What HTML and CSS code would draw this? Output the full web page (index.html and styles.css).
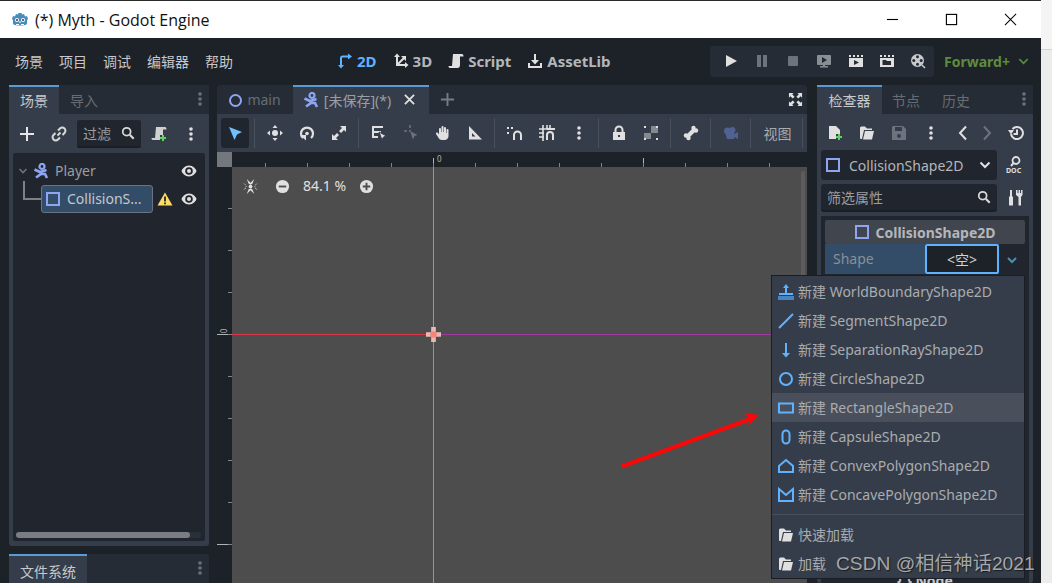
FILE: index.html
```html
<!DOCTYPE html>
<html lang="en">

<head>
    <meta charset="UTF-8">
    <meta name="viewport" content="width=device-width, initial-scale=1.0">
    <title>(*) Myth - Godot Engine</title>
    <link rel="stylesheet" href="styles.css">
</head>

<body>
    <div class="window">
        <div class="titlebar">
            <svg class="logo" viewBox="0 0 18 18"><path fill="#478cbf" d="M1 8l1-3 2 .5L5 3l2 .5L7.500 2h3l.5 1.500L13 3l1 2.500L16 5l1 3-1 1v4c-2 2-12 2-14 0V9z"/><circle cx="6" cy="9" r="2" fill="#fff"/><circle cx="12" cy="9" r="2" fill="#fff"/><circle cx="6" cy="9" r="1" fill="#333"/><circle cx="12" cy="9" r="1" fill="#333"/><path stroke="#fff" d="M5 13.500h3M10 13.500h3M9 10v2"/></svg>
            <span class="title-text">(*) Myth - Godot Engine</span>
            <div class="win-controls">
                <svg viewBox="0 0 14 14"><path stroke="#000" stroke-width="1.200" d="M1 7h12"/></svg>
                <svg viewBox="0 0 14 14"><rect x="1.500" y="1.500" width="11" height="11" fill="none" stroke="#000" stroke-width="1.200"/></svg>
                <svg viewBox="0 0 14 14"><path stroke="#000" stroke-width="1.100" d="M1 1l12 12M13 1L1 13"/></svg>
            </div>
        </div>

        <div class="menubar">
            <div class="menus">
                <span>场景</span><span>项目</span><span>调试</span><span>编辑器</span><span>帮助</span>
            </div>
            <div class="modes">
                <span class="mode active"><svg viewBox="0 0 16 16"><path fill="none" stroke="#5fb2ff" stroke-width="2" d="M4 13V5a1.500 1.500 0 0 1 1.500-1.500H12"/><path fill="#5fb2ff" d="M1 12h6l-3 3.500zM11 0.500v6l4-3z"/></svg>2D</span>
                <span class="mode"><svg viewBox="0 0 16 16"><path fill="none" stroke="#e0e0e0" stroke-width="2" d="M4 3v9h9M4 12l7-7"/><path fill="#e0e0e0" d="M1 4l3-3.500L7 4zM12 9l3.500 3-3.500 3zM8 3h5v5z"/></svg>3D</span>
                <span class="mode"><svg viewBox="0 0 16 16"><path fill="#e0e0e0" d="M5 1h9c1 0 1.500 1 1.500 2.500H12V12c0 2-1 3-2.500 3H2c-1 0-1.500-1-1.500-2H4z"/></svg>Script</span>
                <span class="mode"><svg viewBox="0 0 16 16"><path fill="#e0e0e0" d="M7 1h2v6h3l-4 4.500L4 7h3zM1 10h2v3h10v-3h2v5H1z"/></svg>AssetLib</span>
            </div>
            <div class="run-box">
                <svg viewBox="0 0 16 16"><path fill="#e0e0e0" d="M3 2l11 6-11 6z"/></svg>
                <svg viewBox="0 0 16 16"><path fill="#6d737c" d="M3 2h4v12H3zM9 2h4v12H9z"/></svg>
                <svg viewBox="0 0 16 16"><rect x="3" y="3" width="10" height="10" rx="1" fill="#6d737c"/></svg>
                <svg viewBox="0 0 16 16"><path fill="#8a8f96" d="M2 2h12a1 1 0 0 1 1 1v8a1 1 0 0 1-1 1H9v1h3v1.500H4V13h3v-1H2a1 1 0 0 1-1-1V3a1 1 0 0 1 1-1z"/><path fill="#262c36" d="M6 4l5 3-5 3z"/></svg>
                <svg viewBox="0 0 16 16"><path fill="#e0e0e0" d="M1 2h2v2H1zM5 2h2v2H5zM9 2h2v2H9zM13 2h2v2h-2zM1 5h14v9H1z"/><path fill="#262c36" d="M6 7l5 2.500L6 12z"/></svg>
                <svg viewBox="0 0 16 16"><path fill="#e0e0e0" d="M1 2h2v2H1zM5 2h2v2H5zM9 2h2v2H9zM13 2h2v2h-2zM1 5h14v9H1z"/><path fill="#262c36" d="M3.500 7H7l1 1h4v4H3.500z"/></svg>
                <svg viewBox="0 0 16 16"><circle cx="7.500" cy="7.500" r="6.500" fill="#c8cacc"/><circle cx="7.500" cy="3.800" r="1.500" fill="#262c36"/><circle cx="7.500" cy="11.200" r="1.500" fill="#262c36"/><circle cx="3.800" cy="7.500" r="1.500" fill="#262c36"/><circle cx="11.200" cy="7.500" r="1.500" fill="#262c36"/><path stroke="#c8cacc" stroke-width="1.500" d="M12 12l3 3"/></svg>
            </div>
            <span class="renderer">Forward+<svg viewBox="0 0 12 12"><path fill="none" stroke="#5d8c3f" stroke-width="1.800" d="M1.500 3.500L6 8l4.500-4.500"/></svg></span>
        </div>

        <div class="main">
            <div class="left-col">
                <div class="dock scene-dock">
                    <div class="tabbar">
                        <span class="tab active dock-tab">场景</span>
                        <span class="tab dock-tab">导入</span>
                        <svg class="dots dots-end" viewBox="0 0 6 16"><circle cx="3" cy="3" r="1.800"/><circle cx="3" cy="8" r="1.800"/><circle cx="3" cy="13" r="1.800"/></svg>
                    </div>
                    <div class="scene-tools">
                        <svg class="ic" viewBox="0 0 16 16"><path stroke="#e6e6e6" stroke-width="2" d="M8 1v14M1 8h14"/></svg>
                        <svg class="ic" viewBox="0 0 16 16"><path fill="none" stroke="#d8d8d8" stroke-width="2" d="M6.500 9.500l3-3M7 4.500l2-2a3 3 0 0 1 4.500 4.500l-2 2M9 11.500l-2 2A3 3 0 0 1 2.500 9l2-2"/></svg>
                        <div class="filter-box"><span>过滤</span><svg viewBox="0 0 16 16"><circle cx="6.500" cy="6.500" r="4.500" fill="none" stroke="#d8d8d8" stroke-width="2"/><path stroke="#d8d8d8" stroke-width="2.500" d="M10 10l4.500 4.500"/></svg></div>
                        <svg class="ic" viewBox="0 0 16 16"><path fill="#d0d0d0" d="M5 1h9c1 0 1.500 1 1.500 2.500H12V9H9v5H2c-1 0-1.500-1-1.500-2H4z"/><path stroke="#5fd35f" stroke-width="2" d="M12 9v6M9 12h6"/></svg>
                        <svg class="dots dots-tool" viewBox="0 0 6 16"><circle cx="3" cy="3" r="1.800"/><circle cx="3" cy="8" r="1.800"/><circle cx="3" cy="13" r="1.800"/></svg>
                    </div>
                    <div class="tree">
                        <div class="tree-row">
                            <svg class="arrow" viewBox="0 0 10 10"><path fill="none" stroke="#6d737c" stroke-width="1.600" d="M1.500 3L5 6.500 8.500 3"/></svg>
                            <svg class="ic node-ic" viewBox="0 0 16 16"><circle cx="9" cy="3.500" r="2.500" fill="none" stroke="#8da5f3" stroke-width="2.200"/><path fill="none" stroke="#8da5f3" stroke-width="2.600" d="M1.500 6.500L7 9l6.500-2M8 8v3l-5 3.500M8 11h4l2 4"/></svg>
                            <span class="tree-name">Player</span>
                            <svg class="eye" viewBox="0 0 16 16"><path fill="#e0e0e0" d="M8 2.500C4 2.500 1 6 0.500 8 1 10 4 13.500 8 13.500S15 10 15.500 8C15 6 12 2.500 8 2.500z"/><circle cx="8" cy="8" r="3.800" fill="#21262e"/><circle cx="8" cy="8" r="2" fill="#e0e0e0"/></svg>
                        </div>
                        <div class="tree-row child-row">
                            <span class="connector"></span>
                            <div class="selected-node">
                                <span class="shape-box"></span>
                                <span class="node-label">CollisionS...</span>
                            </div>
                            <svg class="warn" viewBox="0 0 16 16"><path fill="#ffdd65" d="M8 1.500L15.500 14.500H.5z"/><path stroke="#21262e" stroke-width="1.800" d="M8 5.500v5M8 11.500v1.800"/></svg>
                            <svg class="eye" viewBox="0 0 16 16"><path fill="#e0e0e0" d="M8 2.500C4 2.500 1 6 0.500 8 1 10 4 13.500 8 13.500S15 10 15.500 8C15 6 12 2.500 8 2.500z"/><circle cx="8" cy="8" r="3.800" fill="#21262e"/><circle cx="8" cy="8" r="2" fill="#e0e0e0"/></svg>
                        </div>
                        <div class="tree-scroll"><span></span></div>
                    </div>
                </div>
                <div class="dock fs-dock">
                    <div class="tabbar">
                        <span class="tab active fs-tab">文件系统</span>
                        <svg class="dots dots-end" viewBox="0 0 6 16"><circle cx="3" cy="3" r="1.800"/><circle cx="3" cy="8" r="1.800"/><circle cx="3" cy="13" r="1.800"/></svg>
                    </div>
                </div>
            </div>

            <div class="center-col">
                <div class="tabbar scene-tabs">
                    <span class="tab main-tab"><span class="ring"></span>main</span>
                    <span class="tab active unsaved-tab">
                        <svg viewBox="0 0 16 16"><circle cx="9" cy="3.500" r="2.500" fill="none" stroke="#8da5f3" stroke-width="2.200"/><path fill="none" stroke="#8da5f3" stroke-width="2.600" d="M1.500 6.500L7 9l6.500-2M8 8v3l-5 3.500M8 11h4l2 4"/></svg>
                        [未保存](*)
                        <svg class="close" viewBox="0 0 12 12"><path stroke="#e0e0e0" stroke-width="2" d="M1 1l10 10M11 1L1 11"/></svg>
                    </span>
                    <svg class="add-tab" viewBox="0 0 16 16"><path stroke="#777c83" stroke-width="2" d="M8 1v14M1 8h14"/></svg>
                    <svg class="fullscreen" viewBox="0 0 16 16"><path fill="#e0e0e0" d="M1 1h5L4.500 2.500 7 5 5 7 2.500 4.500 1 6zM15 1v5l-1.500-1.500L11 7 9 5l2.500-2.500L10 1zM1 15v-5l1.500 1.500L5 9l2 2-2.500 2.500L6 15zM15 15h-5l1.500-1.500L9 11l2-2 2.500 2.500L15 10z"/></svg>
                </div>
                <div class="viewport-tools">
                    <span class="tool selected"><svg viewBox="0 0 16 16"><path fill="#70bfff" d="M2 2l13 5-5 2.500L7.500 15z"/></svg></span>
                    <i class="sep"></i>
                    <span class="tool"><svg viewBox="0 0 16 16"><path fill="#e0e0e0" d="M8 0l2.500 3h-5zM8 16l-2.500-3h5zM0 8l3-2.500v5zM16 8l-3 2.500v-5z"/><circle cx="8" cy="8" r="3" fill="#e0e0e0"/></svg></span>
                    <span class="tool"><svg viewBox="0 0 16 16"><path fill="none" stroke="#e0e0e0" stroke-width="2.200" d="M4 13a6 6 0 1 1 8 0"/><circle cx="8" cy="8.500" r="1.800" fill="#e0e0e0"/><path fill="#e0e0e0" d="M1 10h6v5.500z"/></svg></span>
                    <span class="tool"><svg viewBox="0 0 16 16"><path fill="#e0e0e0" d="M9 1h6v6l-2-2-3 3-2-2 3-3zM7 15H1V9l2 2 3-3 2 2-3 3z"/></svg></span>
                    <i class="sep"></i>
                    <span class="tool"><svg viewBox="0 0 16 16"><path fill="#e0e0e0" d="M1 1h11v2H3v3h7v2H3v3h4v2H1z"/><path fill="#e0e0e0" stroke="#363d4a" d="M8 7l7.500 4-3 1-1.500 3z"/></svg></span>
                    <span class="tool"><svg viewBox="0 0 16 16"><path stroke="#6d737c" stroke-width="1.600" stroke-dasharray="3 2" d="M1 6h6M7 0v6"/><path fill="#6d737c" d="M7 6l7.500 4-3 1-1.500 3.500z"/></svg></span>
                    <span class="tool"><svg viewBox="0 0 16 16"><path fill="#e0e0e0" d="M4 4a1 1 0 0 1 2 0v3h.5V2a1 1 0 0 1 2 0v5H9V3a1 1 0 0 1 2 0v5h.5V5a1 1 0 0 1 2 0v6c0 2-1.500 4-4 4H7c-2 0-3-1-4-3L1 9c-.5-1 1-2 2-1l1 1.500z"/></svg></span>
                    <span class="tool"><svg viewBox="0 0 16 16"><path fill="#e0e0e0" fill-rule="evenodd" d="M2 1l13 13.500H2zM5 8v3.500h3.500z"/></svg></span>
                    <i class="sep"></i>
                    <span class="tool"><svg viewBox="0 0 16 16"><path fill="none" stroke="#e0e0e0" stroke-width="2" d="M7 15V10a3.500 3.500 0 0 1 7 0v5"/><path fill="#e0e0e0" d="M0 2h2v2H0zM4 2h2v2H4zM0 7h2v2H0z"/></svg></span>
                    <span class="tool"><svg viewBox="0 0 16 16"><path fill="none" stroke="#e0e0e0" stroke-width="1.600" d="M0 4h10M0 8h5M0 12h5M4 0v16M8 0v4M11 0v4"/><path fill="none" stroke="#e0e0e0" stroke-width="2" d="M8 15V10a3 3 0 0 1 6 0v5M8 4h8"/></svg></span>
                    <span class="tool"><svg class="dots" viewBox="0 0 6 16"><circle cx="3" cy="3" r="1.800" fill="#e0e0e0"/><circle cx="3" cy="8" r="1.800" fill="#e0e0e0"/><circle cx="3" cy="13" r="1.800" fill="#e0e0e0"/></svg></span>
                    <i class="sep"></i>
                    <span class="tool"><svg viewBox="0 0 16 16"><path fill="#e0e0e0" fill-rule="evenodd" d="M2 7h1.500V5a4.500 4.500 0 0 1 9 0v2H14v8H2zM5.500 7h5V5a2.500 2.500 0 0 0-5 0zM7 10v2h2v-2z"/></svg></span>
                    <span class="tool"><svg viewBox="0 0 16 16"><path fill="#868a90" d="M8 1h7v7H8v6H1V8h7z"/><path fill="#e0e0e0" d="M1 1h2v2H1zM13 1h2v2h-2zM1 13h2v2H1zM13 13h2v2h-2z"/></svg></span>
                    <i class="sep"></i>
                    <span class="tool"><svg viewBox="0 0 16 16"><path stroke="#e0e0e0" stroke-width="4" d="M4 12l8-8"/><circle cx="3" cy="10.500" r="2.200" fill="#e0e0e0"/><circle cx="5.500" cy="13" r="2.200" fill="#e0e0e0"/><circle cx="10.500" cy="3" r="2.200" fill="#e0e0e0"/><circle cx="13" cy="5.500" r="2.200" fill="#e0e0e0"/></svg></span>
                    <i class="sep"></i>
                    <span class="tool"><svg viewBox="0 0 16 16"><circle cx="4.500" cy="6" r="3.500" fill="#4f6291"/><circle cx="9.500" cy="5" r="3" fill="#4f6291"/><path fill="#4f6291" d="M2 7h9v7H4zM11 9l4-2v7l-4-2z"/></svg></span>
                    <i class="sep"></i>
                    <span class="view-btn">视图</span>
                    <i class="sep"></i>
                </div>
                <div class="ruler-h"><span class="corner"></span><span class="ticks-h"><small class="zero">0</small></span></div>
                <div class="canvas-row">
                    <div class="ruler-v"><small class="zero-v">0</small></div>
                    <div class="canvas">
                        <div class="zoom-bar">
                            <svg viewBox="0 0 16 16"><path fill="#e0e0e0" d="M4 0l4 4 4-4-2 5-2 1-2-1zM4 16l4-4 4 4-2-5-2-1-2 1zM0 4l4 4-4 4 3-2V6zM16 4l-4 4 4 4-3-2V6z"/><circle cx="8" cy="8" r="2" fill="#e0e0e0"/></svg>
                            <svg class="zoom-btn" viewBox="0 0 16 16"><circle cx="8" cy="8" r="7" fill="#e0e0e0"/><path stroke="#4d4d4d" stroke-width="2" d="M4 8h8"/></svg>
                            <span>84.1 %</span>
                            <svg class="zoom-btn" viewBox="0 0 16 16"><circle cx="8" cy="8" r="7" fill="#e0e0e0"/><path stroke="#4d4d4d" stroke-width="2" d="M4 8h8M8 4v8"/></svg>
                        </div>
                        <span class="axis axis-v-top"></span>
                        <span class="axis axis-v-bottom"></span>
                        <span class="axis axis-h-left"></span>
                        <span class="axis axis-h-right"></span>
                        <svg class="origin" viewBox="0 0 16 16"><path fill="#e9b9b4" d="M5.500 0h5v5.500H16v5h-5.500V16h-5v-5.500H0v-5h5.500z"/><circle cx="8" cy="8" r="3.500" fill="#f8837b"/></svg>
                        <span class="canvas-scroll"></span>
                    </div>
                </div>
            </div>

            <div class="dock right-col">
                <div class="tabbar">
                    <span class="tab active insp-tab">检查器</span>
                    <span class="tab insp-tab plain">节点</span>
                    <span class="tab insp-tab plain">历史</span>
                    <svg class="dots dots-end" viewBox="0 0 6 16"><circle cx="3" cy="3" r="1.800"/><circle cx="3" cy="8" r="1.800"/><circle cx="3" cy="13" r="1.800"/></svg>
                </div>
                <div class="insp-tools">
                    <svg viewBox="0 0 16 16"><path fill="#e0e0e0" d="M2 1h7l4 4v4H9v5H2z"/><path stroke="#5fd35f" stroke-width="2" d="M12 9v6M9 12h6"/></svg>
                    <svg viewBox="0 0 16 16"><path fill="#e0e0e0" d="M1 3c0-1 1-1.500 1.500-1.500H6L8 3.500h5V5H5L3 14H2c-.5 0-1-.5-1-1z"/><path fill="#e0e0e0" d="M6 6h9l-2 8.500H4z"/></svg>
                    <svg viewBox="0 0 16 16"><path fill="#6d737c" fill-rule="evenodd" d="M2 1h10l3 3v11H1V2zM4 2v4h7V2zM8 9a2 2 0 1 0 0 4 2 2 0 0 0 0-4z"/></svg>
                    <svg class="dots" viewBox="0 0 6 16"><circle cx="3" cy="3" r="1.800" fill="#e0e0e0"/><circle cx="3" cy="8" r="1.800" fill="#e0e0e0"/><circle cx="3" cy="13" r="1.800" fill="#e0e0e0"/></svg>
                    <svg class="chev" viewBox="0 0 10 16"><path fill="none" stroke="#e0e0e0" stroke-width="2" d="M8 1.500L2 8l6 6.500"/></svg>
                    <svg class="chev" viewBox="0 0 10 16"><path fill="none" stroke="#6d737c" stroke-width="2" d="M2 1.500L8 8l-6 6.500"/></svg>
                    <svg viewBox="0 0 16 16"><path fill="none" stroke="#e0e0e0" stroke-width="2" d="M3 9a6 6 0 1 0 1.500-5M9 4.500V9H5.500"/><path fill="#e0e0e0" d="M0 5h6L3 9.500z"/></svg>
                </div>
                <div class="picker-row">
                    <div class="picker"><span class="shape-box"></span><span>CollisionShape2D</span><svg viewBox="0 0 12 12"><path fill="none" stroke="#e0e0e0" stroke-width="2" d="M1.500 3.500L6 8l4.500-4.500"/></svg></div>
                    <svg class="doc-ic" viewBox="0 0 18 18"><circle cx="10" cy="4.500" r="3.500" fill="none" stroke="#e0e0e0" stroke-width="1.800"/><path stroke="#e0e0e0" stroke-width="2" d="M7.500 7L5 10"/><text x="0" y="17" class="doc-text">DOC</text></svg>
                </div>
                <div class="picker-row filter-row">
                    <div class="picker filter-props"><span>筛选属性</span><svg viewBox="0 0 16 16"><circle cx="6.500" cy="6.500" r="4.500" fill="none" stroke="#d8d8d8" stroke-width="2"/><path stroke="#d8d8d8" stroke-width="2.500" d="M10 10l4.500 4.500"/></svg></div>
                    <svg class="doc-ic" viewBox="0 0 18 18"><path fill="#e0e0e0" d="M4 1h2v6l1 1v8.500H3V8l1-1zM10 1h1.500v3h1V1H14v3h1V1h1.500v5L15 8v8.500h-2.500V8L10 6z"/></svg>
                </div>
                <div class="insp-box">
                    <div class="insp-head"><span class="shape-box"></span>CollisionShape2D</div>
                    <div class="prop-row">
                        <span class="prop-name">Shape</span>
                        <span class="prop-value">&lt;空&gt;</span>
                        <svg viewBox="0 0 12 12"><path fill="none" stroke="#4f8cb0" stroke-width="2" d="M2 4l4 4 4-4"/></svg>
                    </div>
                    <div class="prop-node">{ } Node</div>
                </div>
            </div>
        </div>
    </div>

    <div class="popup">
        <div class="pop-item"><svg viewBox="0 0 16 16"><path fill="#5fb2ff" d="M8 0l3 4H9v5h6v2H1V9h6V4H5z"/><rect y="12" width="16" height="4" fill="#4a83bd"/></svg>新建 WorldBoundaryShape2D</div>
        <div class="pop-item"><svg viewBox="0 0 16 16"><path stroke="#5fb2ff" stroke-width="2" d="M1 15L15 1"/></svg>新建 SegmentShape2D</div>
        <div class="pop-item"><svg viewBox="0 0 16 16"><path fill="#5fb2ff" d="M7 1h2v10h3l-4 4.500L4 11h3z"/></svg>新建 SeparationRayShape2D</div>
        <div class="pop-item"><svg viewBox="0 0 16 16"><circle cx="8" cy="8" r="6" fill="none" stroke="#5fb2ff" stroke-width="2"/></svg>新建 CircleShape2D</div>
        <div class="pop-item hover"><svg viewBox="0 0 16 16"><rect x="1" y="3.500" width="14" height="9" fill="none" stroke="#5fb2ff" stroke-width="2"/></svg>新建 RectangleShape2D</div>
        <div class="pop-item"><svg viewBox="0 0 16 16"><rect x="4.500" y="1.500" width="7" height="13" rx="3.500" fill="none" stroke="#5fb2ff" stroke-width="2"/></svg>新建 CapsuleShape2D</div>
        <div class="pop-item"><svg viewBox="0 0 16 16"><path fill="none" stroke="#5fb2ff" stroke-width="2" d="M1 8l7-6 7 6v6H1z"/></svg>新建 ConvexPolygonShape2D</div>
        <div class="pop-item"><svg viewBox="0 0 16 16"><path fill="none" stroke="#5fb2ff" stroke-width="2" d="M1 2l7 6 7-6v12H1z"/></svg>新建 ConcavePolygonShape2D</div>
        <div class="pop-sep"></div>
        <div class="pop-item"><svg viewBox="0 0 16 16"><path fill="#e0e0e0" d="M1 3c0-1 1-1.500 1.500-1.500H6L8 3.500h5V5H5L3 14H2c-.5 0-1-.5-1-1z"/><path fill="#e0e0e0" d="M6 6h9l-2 8.500H4z"/></svg>快速加载</div>
        <div class="pop-item"><svg viewBox="0 0 16 16"><path fill="#e0e0e0" d="M1 3c0-1 1-1.500 1.500-1.500H6L8 3.500h5V5H5L3 14H2c-.5 0-1-.5-1-1z"/><path fill="#e0e0e0" d="M6 6h9l-2 8.500H4z"/></svg>加载</div>
    </div>

    <svg class="red-arrow" viewBox="0 0 150 60"><path stroke="#f80808" stroke-width="4" stroke-linecap="round" d="M3 58L130 11"/><path fill="#f80808" d="M139 7L124 5l6 6-2 7z"/></svg>
    <span class="watermark">CSDN @相信神话2021</span>
</body>

</html>
```

FILE: styles.css
```css
* {
    margin: 0;
    padding: 0;
    box-sizing: border-box;
}

body {
    font-family: "Noto Sans", "Noto Sans CJK SC", sans-serif;
    font-size: 14px;
    color: #c6c8cb;
    background-image: linear-gradient(#f4f4f4 49px, #d4d4d4 49px, #d4d4d4 50px, #ececec 50px);
    width: 1052px;
    height: 583px;
    overflow: hidden;
    position: relative;
}

svg {
    display: block;
    flex: none;
}

.window {
    width: 1041px;
    height: 583px;
    background-color: #1d2229;
    display: flex;
    flex-direction: column;
}

/* title bar */
.titlebar {
    height: 38px;
    flex: none;
    background-color: #fff;
    border-top: 1px solid #2a2a2a;
    display: flex;
    align-items: center;
    padding-left: 11px;
    color: #111;
}

.logo {
    width: 18px;
    height: 18px;
}

.title-text {
    margin-left: 6px;
    font-family: "Open Sans", "Noto Sans CJK SC", sans-serif;
    font-size: 16px;
}

.win-controls {
    margin-left: auto;
    display: flex;
    gap: 46px;
    padding-right: 24px;
}

.win-controls svg {
    width: 13px;
    height: 13px;
}

/* menu bar */
.menubar {
    height: 46px;
    flex: none;
    display: flex;
    align-items: center;
    padding-left: 15px;
    position: relative;
}

.menus {
    display: flex;
    gap: 16px;
    width: 322px;
    color: #c6c8cb;
}

.modes {
    display: flex;
    gap: 16px;
    font-size: 15px;
    font-weight: 700;
    color: #b4b6ba;
}

.mode {
    display: flex;
    align-items: center;
    gap: 4px;
}

.mode svg {
    width: 16px;
    height: 16px;
}

.mode.active {
    color: #5fb2ff;
}

.run-box {
    margin-left: auto;
    width: 224px;
    height: 31px;
    background-color: #262c36;
    border-radius: 3px;
    display: flex;
    align-items: center;
    justify-content: space-between;
    padding: 0 8px 0 13px;
}

.run-box svg {
    width: 16px;
    height: 16px;
}

.renderer {
    width: 107px;
    padding-left: 10px;
    color: #5d8c3f;
    font-weight: 700;
    display: flex;
    align-items: center;
    gap: 8px;
}

.renderer svg {
    width: 11px;
    height: 11px;
}

/* docks */
.main {
    flex: 1;
    display: flex;
    padding-left: 9px;
    padding-top: 1px;
    min-height: 0;
}

.left-col {
    width: 200px;
    flex: none;
    display: flex;
    flex-direction: column;
    gap: 8px;
}

.dock {
    background-color: #363d4a;
    border-radius: 3px;
    display: flex;
    flex-direction: column;
}

.scene-dock {
    height: 464px;
}

.fs-dock {
    flex: 1;
}

.tabbar {
    height: 29px;
    flex: none;
    background-color: #262c36;
    display: flex;
    align-items: stretch;
    position: relative;
    border-radius: 3px 3px 0 0;
}

.tab {
    display: flex;
    align-items: center;
    justify-content: center;
    color: #676c74;
    border-top: 2px solid transparent;
    padding-bottom: 2px;
}

.tab.active {
    background-color: #363d4a;
    border-top-color: #5b9bd5;
    color: #c6c8cb;
}

.dock-tab {
    width: 50px;
}

.fs-tab {
    width: 78px;
    padding: 2px 0 0;
}

.dots {
    width: 6px;
    height: 16px;
    fill: #6d737c;
}

.dots-end {
    position: absolute;
    right: 6px;
    top: 6px;
}

.scene-tools {
    height: 39px;
    flex: none;
    display: flex;
    align-items: center;
    padding-left: 10px;
}

.ic {
    width: 16px;
    height: 16px;
}

.scene-tools .ic:nth-child(2) {
    margin-left: 16px;
}

.filter-box {
    width: 64px;
    height: 28px;
    margin: 0 10px;
    background-color: #21262e;
    border-bottom: 2px solid #1a1e24;
    border-radius: 2px;
    display: flex;
    align-items: center;
    justify-content: space-between;
    padding: 0 6px;
    color: #9a9da2;
}

.filter-box svg {
    width: 14px;
    height: 14px;
}

.dots-tool {
    margin-left: 21px;
    fill: #e0e0e0;
}

.tree {
    flex: 1;
    margin: 0 4px 5px;
    background-color: #21262e;
    border-radius: 2px;
    display: flex;
    flex-direction: column;
    padding-top: 4px;
}

.tree-row {
    height: 28px;
    display: flex;
    align-items: center;
    position: relative;
    padding-left: 5px;
}

.arrow {
    width: 10px;
    height: 10px;
}

.node-ic {
    margin-left: 5px;
}

.tree-name {
    margin-left: 6px;
    color: #9a9da2;
    padding-bottom: 2px;
}

.eye {
    width: 16px;
    height: 16px;
    position: absolute;
    left: 168px;
    top: 6px;
}

.child-row {
    padding-left: 28px;
}

.connector {
    position: absolute;
    left: 10px;
    top: -4px;
    width: 18px;
    height: 19px;
    border-left: 2px solid #7c8187;
    border-bottom: 2px solid #7c8187;
}

.selected-node {
    width: 112px;
    height: 28px;
    background-color: #334d68;
    border: 1px solid #6b7380;
    border-radius: 3px;
    display: flex;
    align-items: center;
    gap: 7px;
    padding-left: 4px;
    color: #c6c8cb;
}

.node-label {
    padding-bottom: 2px;
}

.shape-box {
    width: 14px;
    height: 14px;
    border: 2px solid #8da5f3;
    flex: none;
}

.warn {
    width: 16px;
    height: 16px;
    position: absolute;
    left: 144px;
    top: 6px;
}

.tree-scroll {
    margin: auto 4px 3px 3px;
    height: 6px;
    background-color: #2a2f38;
    border-radius: 3px;
}

.tree-scroll span {
    display: block;
    width: 174px;
    height: 6px;
    background-color: #7a7e84;
    border-radius: 3px;
}

/* center */
.center-col {
    width: 590px;
    flex: none;
    margin-left: 8px;
    display: flex;
    flex-direction: column;
}

.main-tab {
    width: 76px;
    gap: 5px;
}

.ring {
    width: 13px;
    height: 13px;
    border: 2px solid #8da5f3;
    border-radius: 50%;
    margin-top: 2px;
}

.unsaved-tab {
    width: 136px;
    gap: 5px;
    padding-right: 4px;
    color: #9a9da2 !important;
}

.unsaved-tab svg {
    width: 16px;
    height: 16px;
}

.unsaved-tab .close {
    width: 11px;
    height: 11px;
    margin-left: 8px;
}

.add-tab {
    width: 15px;
    height: 15px;
    margin: 7px 0 0 11px;
}

.fullscreen {
    width: 15px;
    height: 15px;
    position: absolute;
    right: 4px;
    top: 7px;
}

.viewport-tools {
    height: 38px;
    flex: none;
    background-color: #363d4a;
    display: flex;
    align-items: center;
    padding-left: 2px;
}

.tool {
    width: 32px;
    height: 30px;
    display: flex;
    align-items: center;
    justify-content: center;
    flex: none;
}

.tool svg:not(.dots) {
    width: 16px;
    height: 16px;
}

.tool.selected {
    background-color: #21262e;
    border-radius: 3px;
    width: 28px;
    margin: 0 2px;
}

.sep {
    width: 1px;
    height: 30px;
    background-color: #4a505b;
    margin: 0 4px 0 3px;
    flex: none;
}

.view-btn {
    width: 44px;
    text-align: center;
    color: #a8abaf;
    margin-left: 1px;
}

.ruler-h {
    height: 15px;
    flex: none;
    display: flex;
}

.corner {
    width: 15px;
    background-color: #74777c;
}

.ticks-h {
    flex: 1;
    position: relative;
    background-color: #1d2229;
    background-image: linear-gradient(90deg, #80848a 1px, transparent 1px), linear-gradient(90deg, #b0b3b6 1px, transparent 1px);
    background-size: 42px 4px, 210px 9px;
    background-position: 33px bottom, 201px bottom;
    background-repeat: repeat-x;
}

.zero {
    position: absolute;
    left: 205px;
    top: 2px;
    font-size: 8px;
    line-height: 10px;
    color: #b0b3b6;
}

.canvas-row {
    flex: 1;
    display: flex;
    min-height: 0;
}

.ruler-v {
    width: 15px;
    flex: none;
    position: relative;
    background-image: linear-gradient(#80848a 1px, transparent 1px), linear-gradient(#b0b3b6 1px, transparent 1px);
    background-size: 4px 42px, 15px 210px;
    background-position: right 41px, right 167px;
    background-repeat: repeat-y;
}

.zero-v {
    position: absolute;
    left: 5px;
    top: 159px;
    font-size: 8px;
    line-height: 10px;
    color: #b0b3b6;
    transform: rotate(-90deg);
}

.canvas {
    flex: 1;
    background-color: #4d4d4d;
    position: relative;
}

.zoom-bar {
    display: flex;
    align-items: center;
    padding: 9px 0 0 11px;
    color: #e0e0e0;
    font-size: 14px;
}

.zoom-bar svg {
    width: 15px;
    height: 15px;
}

.zoom-bar .zoom-btn {
    margin-left: 17px;
}

.zoom-bar span {
    margin-left: 13px;
    width: 56px;
    padding-bottom: 2px;
}

.zoom-bar span + .zoom-btn {
    margin-left: 0;
}

.axis {
    position: absolute;
}

.axis-v-top {
    left: 201px;
    top: 0;
    width: 1px;
    height: 167px;
    background-color: #8ab03a;
}

.axis-v-bottom {
    left: 201px;
    top: 167px;
    width: 1px;
    bottom: 0;
    background-color: #8d9a8d;
}

.axis-h-left {
    left: 0;
    top: 167px;
    width: 201px;
    height: 1px;
    background-color: #d9384a;
}

.axis-h-right {
    left: 201px;
    top: 167px;
    right: 0;
    height: 1px;
    background-color: #a03aa0;
}

.origin {
    position: absolute;
    left: 194px;
    top: 160px;
    width: 15px;
    height: 15px;
}

.canvas-scroll {
    position: absolute;
    right: 2px;
    top: 4px;
    bottom: 8px;
    width: 4px;
    background-color: #5c5c5c;
    border-radius: 2px;
}

/* inspector */
.right-col {
    width: 216px;
    flex: none;
    margin-left: 10px;
}

.insp-tab {
    width: 65px;
}

.insp-tab.plain {
    width: 36px;
}

.insp-tab.active + .insp-tab.plain {
    margin-left: 6px;
    margin-right: 14px;
}

.insp-tools {
    height: 36px;
    flex: none;
    display: flex;
    align-items: center;
    padding: 2px 0 0 10px;
}

.insp-tools svg {
    width: 16px;
    height: 16px;
    margin-right: 16px;
}

.insp-tools .dots {
    width: 6px;
    margin: 0 24px 0 5px;
}

.insp-tools .chev {
    width: 10px;
    margin-right: 14px;
}

.insp-tools .chev + .chev {
    margin-right: 16px;
}

.picker-row {
    display: flex;
    align-items: center;
    padding-left: 4px;
    gap: 9px;
    height: 30px;
    flex: none;
}

.filter-row {
    margin-top: 4px;
    height: 28px;
}

.picker {
    width: 176px;
    height: 100%;
    background-color: #21262e;
    border-radius: 3px;
    display: flex;
    align-items: center;
    gap: 9px;
    padding: 0 6px 0 5px;
    color: #b4b6ba;
}

.picker svg {
    width: 12px;
    height: 12px;
    margin-left: auto;
}

.filter-props {
    color: #9a9da2;
    padding-left: 6px;
    border-bottom: 2px solid #1a1e24;
}

.filter-props svg {
    width: 14px;
    height: 14px;
}

.doc-ic {
    width: 18px;
    height: 18px;
}

.doc-text {
    font-size: 7px;
    font-weight: 700;
    fill: #e0e0e0;
}

.insp-box {
    flex: 1;
    margin: 4px 4px 0;
    background-color: #21262e;
    padding: 4px 4px 0;
    min-height: 0;
    overflow: hidden;
}

.insp-head {
    height: 24px;
    background-color: #41454e;
    border-radius: 2px;
    display: flex;
    align-items: center;
    justify-content: center;
    gap: 7px;
    font-weight: 700;
    color: #b4b6ba;
}

.prop-row {
    height: 30px;
    display: flex;
    align-items: stretch;
}

.prop-name {
    width: 100px;
    background-color: #334d68;
    color: #8b8f95;
    padding: 5px 8px;
}

.prop-value {
    width: 74px;
    background-color: #1d2229;
    border: 2px solid #5fb2ff;
    border-radius: 2px;
    display: flex;
    align-items: center;
    justify-content: center;
    color: #d0d2d4;
}

.prop-row svg {
    width: 12px;
    height: 12px;
    margin: 10px 0 0 7px;
}

.prop-node {
    margin-top: 297px;
    text-align: center;
    font-weight: 700;
}

/* things on top */
.popup {
    position: absolute;
    left: 771px;
    top: 275px;
    width: 254px;
    height: 304px;
    background-color: #363d4a;
    border: 1px solid #1a1e24;
    padding-top: 1px;
}

.pop-item {
    height: 29px;
    display: flex;
    align-items: center;
    gap: 4px;
    padding: 0 0 2px 6px;
    color: #a9acb0;
    white-space: nowrap;
}

.pop-item svg {
    width: 16px;
    height: 16px;
    margin-top: 2px;
}

.pop-item.hover {
    background-color: #4a505b;
}

.pop-sep {
    height: 1px;
    margin: 5px 0 5px;
    background-color: #4a505b;
}

.red-arrow {
    position: absolute;
    left: 620px;
    top: 408px;
    width: 150px;
    height: 60px;
}

.watermark {
    position: absolute;
    left: 836px;
    top: 553px;
    font-family: "Liberation Sans", "Noto Sans CJK SC", sans-serif;
    font-size: 19.2px;
    line-height: 22px;
    color: #a4a7ab;
    text-shadow: 1px 1px 1px #1a1a1a;
    white-space: nowrap;
}
```
